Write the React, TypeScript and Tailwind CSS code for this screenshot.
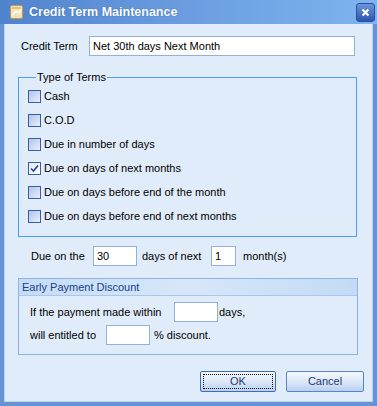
import React from "react";

const font = { fontFamily: '"Liberation Sans", Arial, sans-serif' };

function Check({ checked }: { checked?: boolean }) {
  return (
    <span
      className={
        "flex h-[13px] w-[13px] shrink-0 items-center justify-center border border-[#3d5aa6] " +
        (checked ? "bg-gradient-to-br from-[#dfe8f6] to-white" : "bg-gradient-to-br from-[#adc4ea] to-[#e9f0fa]")
      }
    >
      {checked && (
        <svg width="9" height="9" viewBox="0 0 9 9">
          <path d="M1 4.5 L3.5 7 L8 1.5" fill="none" stroke="#21409a" strokeWidth="1.6" />
        </svg>
      )}
    </span>
  );
}

function Box({ w, value }: { w: string; value?: string }) {
  return (
    <div className={"flex h-5 items-center border border-[#92b2dc] bg-white px-[3px] text-[11px] text-black " + w}>
      {value}
    </div>
  );
}

const terms = [
  "Cash",
  "C.O.D",
  "Due in number of days",
  "Due on days of next months",
  "Due on days before end of the month",
  "Due on days before end of next months",
];

export default function App() {
  return (
    <div className="h-[406px] w-[377px] bg-[#e0ecfa]" style={font}>
      <div className="flex h-full flex-col border-x-4 border-b-4 border-[#6593d4]">
        {/* title bar */}
        <div className="-mx-[4px] flex h-6 items-center bg-gradient-to-r from-[#4f83cc] via-[#6b9de0] to-[#7fb4ee] pl-[10px] pr-[2px]">
          <svg width="13" height="14" viewBox="0 0 13 14" className="mr-[6px]">
            <rect x="0.5" y="0.5" width="12" height="13" rx="1.5" fill="#f3e2b8" stroke="#c49a4e" />
            <path d="M2 10 L6 6 L9 8 L11 4" fill="none" stroke="#fff" strokeWidth="1.5" />
            <rect x="2" y="2" width="9" height="2" fill="#e2c37f" />
          </svg>
          <span className="text-[12.5px] font-bold text-white [text-shadow:0_0_1px_#2a5aa0]">
            Credit Term Maintenance
          </span>
          <div className="ml-auto flex h-[19px] w-[19px] items-center justify-center rounded-[3px] border border-[#2b4f9c] bg-gradient-to-b from-[#6d95dc] to-[#2c55ad]">
            <svg width="9" height="9" viewBox="0 0 9 9">
              <path d="M1.5 1.5 L7.5 7.5 M7.5 1.5 L1.5 7.5" stroke="#fff" strokeWidth="2.2" />
            </svg>
          </div>
        </div>

        <div className="flex flex-1 flex-col border border-t-0 border-[#bcd3f0] pl-[13px] pr-[15px] text-[11px] text-black">
          {/* credit term */}
          <div className="mt-3 flex items-center">
            <span className="w-[71px] pl-[3px]">Credit Term</span>
            <Box w="w-[266px]" value="Net 30th days Next Month" />
          </div>

          {/* type of terms */}
          <fieldset className="mt-[14px] h-[167px] w-[339px] border border-[#49a1f5] pl-[9px] pt-[6px]">
            <legend className="ml-[8px] px-[1px] leading-[14px]">Type of Terms</legend>
            <div className="flex flex-col gap-[11px]">
              {terms.map((t, i) => (
                <div key={t} className="flex h-[13px] items-center gap-[3px] leading-[13px]">
                  <Check checked={i === 3} />
                  <span>{t}</span>
                </div>
              ))}
            </div>
          </fieldset>

          {/* due on row */}
          <div className="mt-[9px] flex items-center pl-[13px]">
            <span className="w-[62px]">Due on the</span>
            <Box w="w-[44px]" value="30" />
            <span className="ml-[5px] w-[69px]">days of next</span>
            <Box w="w-[25px]" value="1" />
            <span className="ml-[7px]">month(s)</span>
          </div>

          {/* early payment */}
          <div className="mt-[12px] h-[77px] w-[340px] border border-[#8db4e6]">
            <div className="flex h-[17px] items-center border-b border-[#a9c6ec] bg-gradient-to-r from-[#c6dcf6] via-[#d7e7f9] to-[#c4daf4] pl-[3px] text-[#15428b]">
              Early Payment Discount
            </div>
            <div className="flex flex-col gap-[3px] pl-[11px] pt-[6px]">
              <div className="flex items-center">
                <span className="w-[144px]">If the payment made within</span>
                <Box w="w-[44px]" />
                <span className="ml-[1px]">days,</span>
              </div>
              <div className="flex items-center">
                <span className="w-[76px]">will entitled to</span>
                <Box w="w-[44px]" />
                <span className="ml-[4px]">% discount.</span>
              </div>
            </div>
          </div>

          {/* buttons */}
          <div className="mt-[16px] flex justify-end gap-[10px]">
            <button className="flex h-[21px] w-[76px] items-center justify-center rounded-[2px] border border-[#3c6cb4] bg-gradient-to-b from-[#f4f8fd] via-[#dde9f8] to-[#b8d0f0] p-[2px] text-[11px] text-[#1e3a73]">
              <span className="flex h-full w-full items-center justify-center border border-dotted border-black">OK</span>
            </button>
            <button className="-mr-[7px] flex h-[21px] w-[78px] items-center justify-center rounded-[2px] border border-[#5a86c6] bg-gradient-to-b from-[#f4f8fd] via-[#dde9f8] to-[#b8d0f0] text-[11px] text-[#1e3a73]">
              Cancel
            </button>
          </div>
        </div>
      </div>
    </div>
  );
}
